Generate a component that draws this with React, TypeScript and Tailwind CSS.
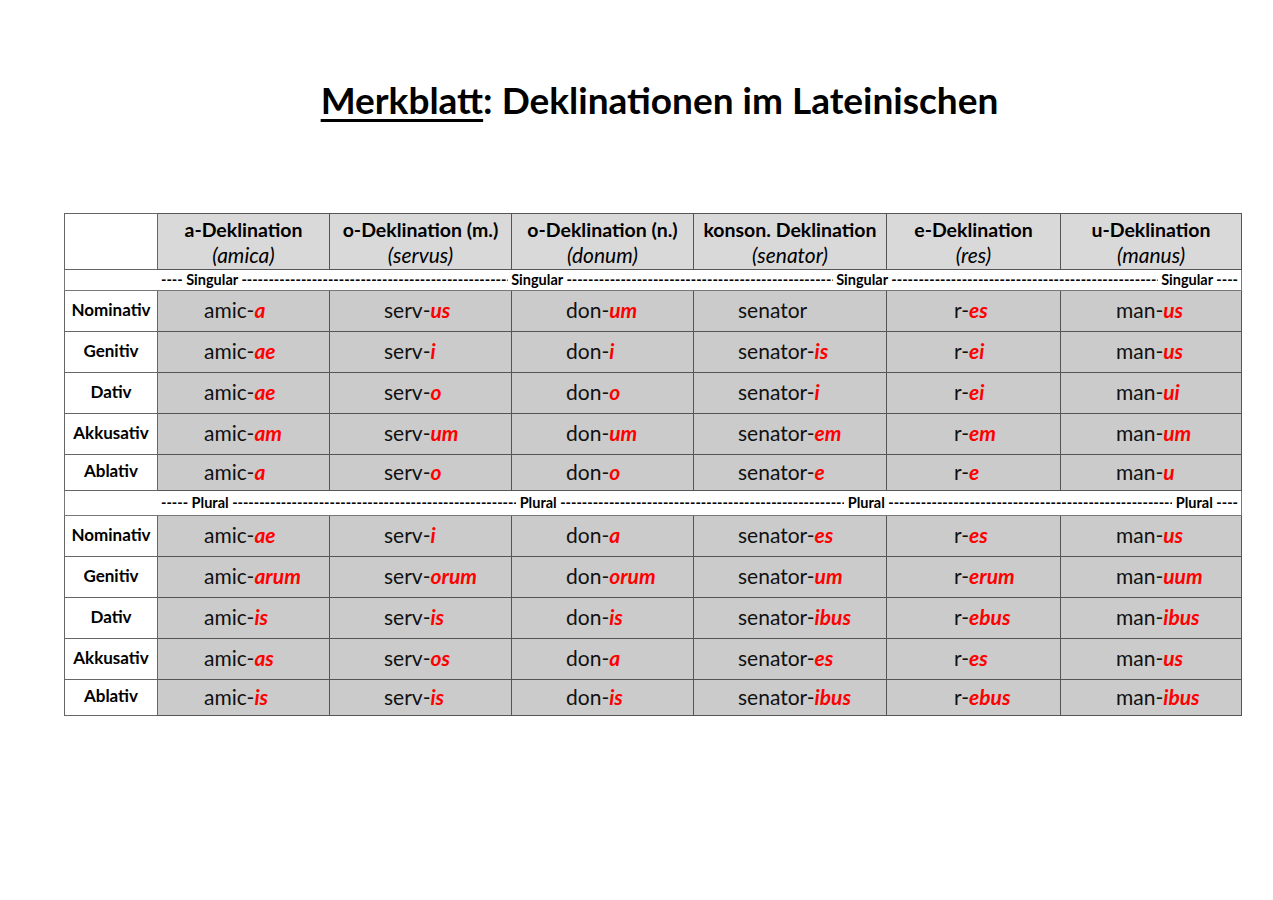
import React from "react";

type Form = { stem: string; end: string };

const cols = [
  { title: "a-Deklination", word: "(amica)", pad: "pl-[46px]" },
  { title: "o-Deklination (m.)", word: "(servus)", pad: "pl-[54px]" },
  { title: "o-Deklination (n.)", word: "(donum)", pad: "pl-[54px]" },
  { title: "konson. Deklination", word: "(senator)", pad: "pl-[44px]" },
  { title: "e-Deklination", word: "(res)", pad: "pl-[67px]" },
  { title: "u-Deklination", word: "(manus)", pad: "pl-[55px]" },
];

const f = (stem: string, end: string): Form => ({ stem, end });

const singular: [string, Form[]][] = [
  ["Nominativ", [f("amic-", "a"), f("serv-", "us"), f("don-", "um"), f("senator", ""), f("r-", "es"), f("man-", "us")]],
  ["Genitiv", [f("amic-", "ae"), f("serv-", "i"), f("don-", "i"), f("senator-", "is"), f("r-", "ei"), f("man-", "us")]],
  ["Dativ", [f("amic-", "ae"), f("serv-", "o"), f("don-", "o"), f("senator-", "i"), f("r-", "ei"), f("man-", "ui")]],
  ["Akkusativ", [f("amic-", "am"), f("serv-", "um"), f("don-", "um"), f("senator-", "em"), f("r-", "em"), f("man-", "um")]],
  ["Ablativ", [f("amic-", "a"), f("serv-", "o"), f("don-", "o"), f("senator-", "e"), f("r-", "e"), f("man-", "u")]],
];

const plural: [string, Form[]][] = [
  ["Nominativ", [f("amic-", "ae"), f("serv-", "i"), f("don-", "a"), f("senator-", "es"), f("r-", "es"), f("man-", "us")]],
  ["Genitiv", [f("amic-", "arum"), f("serv-", "orum"), f("don-", "orum"), f("senator-", "um"), f("r-", "erum"), f("man-", "uum")]],
  ["Dativ", [f("amic-", "is"), f("serv-", "is"), f("don-", "is"), f("senator-", "ibus"), f("r-", "ebus"), f("man-", "ibus")]],
  ["Akkusativ", [f("amic-", "as"), f("serv-", "os"), f("don-", "a"), f("senator-", "es"), f("r-", "es"), f("man-", "us")]],
  ["Ablativ", [f("amic-", "is"), f("serv-", "is"), f("don-", "is"), f("senator-", "ibus"), f("r-", "ebus"), f("man-", "ibus")]],
];

// dash filler, clipped to whatever room is left between the labels
const Dashes = ({ n }: { n: number }) => (
  <span className="min-w-0 flex-1 overflow-hidden whitespace-nowrap">{"-".repeat(n)}</span>
);

const Separator = ({ label, lead }: { label: string; lead: string }) => (
  <tr className={label === "Singular" ? "h-[21px]" : "h-[25px]"}>
    <td colSpan={7} className="border border-[#777] bg-white px-[3px] py-0">
      <div className="flex items-center whitespace-nowrap text-[14.5px] font-bold leading-none text-black">
        <span className="shrink-0 pl-[93px]">{lead}&nbsp;{label}&nbsp;</span>
        <Dashes n={56} />
        <span className="shrink-0">&nbsp;{label}&nbsp;</span>
        <Dashes n={54} />
        <span className="shrink-0">&nbsp;{label}&nbsp;</span>
        <Dashes n={56} />
        <span className="shrink-0">&nbsp;{label} ----</span>
      </div>
    </td>
  </tr>
);

const CaseRows = ({ rows }: { rows: [string, Form[]][] }) => (
  <>
    {rows.map(([name, forms], i) => (
      <tr key={name} className={i === rows.length - 1 ? "h-[36px]" : "h-[41px]"}>
        <td className="border border-[#666] bg-white pb-[3px] text-center text-[17px] font-bold text-black">{name}</td>
        {forms.map((fm, j) => (
          <td key={j} className={`border border-[#555] bg-[#cbcbcb] pb-[2px] text-[21px] text-[#111] ${cols[j].pad}`}>
            {fm.stem}
            {fm.end && <span className="font-bold italic text-[#ff0000]">{fm.end}</span>}
          </td>
        ))}
      </tr>
    ))}
  </>
);

export default function App() {
  return (
    <div className="min-h-[900px] w-[1273px] bg-white" style={{ fontFamily: "Lato, 'Open Sans', sans-serif" }}>
      <h1 className="pl-[46px] pt-[76px] text-center text-[37px] font-bold leading-[48px] text-black">
        <span className="underline decoration-[3px] underline-offset-[5px]">Merkblatt</span>: Deklinationen im Lateinischen
      </h1>
      <div className="pl-[64px] pt-[89px]">
        <table className="w-[1177px] table-fixed border-collapse">
          <colgroup>
            <col className="w-[93px]" />
            <col className="w-[172px]" />
            <col className="w-[182px]" />
            <col className="w-[182px]" />
            <col className="w-[193px]" />
            <col className="w-[174px]" />
            <col className="w-[181px]" />
          </colgroup>
          <tbody>
            <tr className="h-[56px]">
              <td className="border border-[#666] bg-white"></td>
              {cols.map((c) => (
                <td key={c.title} className="border border-[#555] bg-[#d9d9d9] text-center text-[19.5px] leading-[25px] text-black">
                  <div className="font-bold">{c.title}</div>
                  <div className="text-[21px] italic">{c.word}</div>
                </td>
              ))}
            </tr>
            <Separator label="Singular" lead="----" />
            <CaseRows rows={singular} />
            <Separator label="Plural" lead="-----" />
            <CaseRows rows={plural} />
          </tbody>
        </table>
      </div>
    </div>
  );
}
